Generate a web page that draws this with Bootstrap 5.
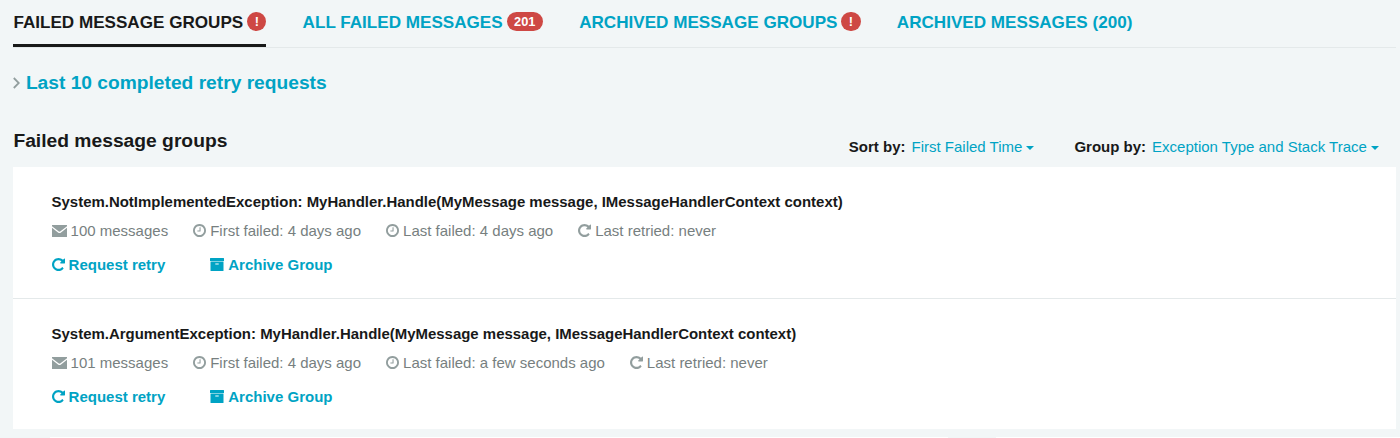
<!DOCTYPE html>
<html lang="en">
<head>
<meta charset="utf-8">
<title>Failed message groups</title>
<link href="https://cdn.jsdelivr.net/npm/bootstrap@5.3.0/dist/css/bootstrap.min.css" rel="stylesheet">
<style>
body{background:#f2f6f7;color:#181919;font-family:"Liberation Sans",Arial,sans-serif;font-size:15px;line-height:20px;height:438px;overflow:hidden}
a{color:#00a3c4;text-decoration:none}
svg{display:block;flex:none}
.page{padding:0 3.600px 0 13.400px}
.tabs{height:48px;border-bottom:1px solid #e4e9ea;gap:36.300px;font-size:17.100px;font-weight:700;flex-wrap:nowrap}
.tabs .nav-link{padding:12px 0 0;height:47px;color:#00a3c4;display:flex;gap:4px;line-height:21px;white-space:nowrap;border-bottom:0 solid #181919}
.tabs .nav-link.active{color:#181919;border-bottom-width:3px}
.tabs .badge{background:#ce4844;font-size:12.8px;line-height:19px;height:19px;padding:0 7.400px;border-radius:10px}
.retry{height:69px;font-size:19.200px;font-weight:700;gap:5.500px}
.heading{height:50px}
.heading h1{font-size:19.26px;font-weight:700;line-height:22px;margin:13px 0 0}
.filters{margin-top:20px;padding-right:17.500px;gap:40px}
.filters a{margin-left:6px}
.caret{display:inline-block;border:4px solid transparent;border-top:4.500px solid #00a3c4;border-bottom:0;vertical-align:2px;margin-left:4px}
.group-item{height:131px;padding:25px 0 0 38.200px}
.group-item+.group-item{border-top:1px solid #e4e9ea}
.group-item h2{font-size:14.960px;font-weight:700;line-height:20px;margin:0 0 9px}
.meta{color:#777f7f;gap:25px;margin-bottom:14px}
.meta svg{color:#929e9e}
.group-item svg:not(.mail){margin-bottom:1px}
.act{font-weight:700;gap:45px}
.next-panel{height:2px;margin-top:8px}
</style>
<script src="https://cdn.jsdelivr.net/npm/bootstrap@5.3.0/dist/js/bootstrap.bundle.min.js"></script>
</head>
<body>
<svg width="0" height="0" class="position-absolute">
<symbol id="clock" viewBox="0 128 1536 1536"><path fill="currentColor" d="M896 544v448q0 14-9 23t-23 9h-320q-14 0-23-9t-9-23v-64q0-14 9-23t23-9h224v-352q0-14 9-23t23-9h64q14 0 23 9t9 23zm416 352q0-148-73-273t-198-198-273-73-273 73-198 198-73 273 73 273 198 198 273 73 273-73 198-198 73-273zm224 0q0 209-103 385.500t-279.500 279.500-385.500 103-385.500-103-279.500-279.500-103-385.500 103-385.500 279.500-279.500 385.500-103 385.500 103 279.500 279.500 103 385.500z"/></symbol>
<symbol id="repeat" viewBox="128 128 1536 1536"><path fill="currentColor" d="M1664 256v448q0 26-19 45t-45 19h-448q-42 0-59-40-17-39 14-69l138-138q-148-137-349-137-104 0-198.500 40.500t-163.500 109.500-109.500 163.500-40.500 198.500 40.500 198.500 109.500 163.500 163.500 109.500 198.500 40.500q119 0 225-52t179-147q7-10 23-12 15 0 25 9l137 138q9 8 9.500 20.500t-7.500 22.500q-109 132-264 204.500t-327 72.500q-156 0-298-61t-245-164-164-245-61-298 61-298 164-245 245-164 298-61q147 0 284.500 55.500t244.500 156.500l130-129q29-31 70-14 39 17 39 59z"/></symbol>
<symbol id="mail" viewBox="0 0 15 12" preserveAspectRatio="none"><path fill="currentColor" d="M0 0h15v1.200L8.500 6.300q-1 .8-2 0L0 1.200z M0 2.700L6 7.500q1.500 1.200 3 0L15 2.700V12H0z"/></symbol>
<symbol id="box" viewBox="0 0 14 13"><path fill="currentColor" fill-rule="evenodd" d="M.5 0h13q.5 0 .5.500V3H0V.500Q0 0 .5 0zM.5 3.500h13v9q0 .5-.5.500H1q-.5 0-.5-.5zM5.300 5.500v1h3.400v-1z"/></symbol>
</svg>
<div class="page">
  <nav class="nav tabs">
    <a class="nav-link active" href="#">FAILED MESSAGE GROUPS <span class="badge">!</span></a>
    <a class="nav-link" href="#">ALL FAILED MESSAGES <span class="badge">201</span></a>
    <a class="nav-link" href="#">ARCHIVED MESSAGE GROUPS <span class="badge">!</span></a>
    <a class="nav-link" href="#">ARCHIVED MESSAGES (200)</a>
  </nav>
  <div class="retry d-flex align-items-center">
    <svg width="7" height="12" viewBox="0 0 7 12" fill="none" stroke="#929e9e" stroke-width="1.800"><path d="M.8 1l5 5-5 5"/></svg>
    <a href="#">Last 10 completed retry requests</a>
  </div>
  <div class="heading d-flex justify-content-between">
    <h1>Failed message groups</h1>
    <div class="filters d-flex">
      <div><b>Sort by:</b><a href="#">First Failed Time<span class="caret"></span></a></div>
      <div><b>Group by:</b><a href="#">Exception Type and Stack Trace<span class="caret"></span></a></div>
    </div>
  </div>
  <main class="bg-white">
    <section class="group-item">
      <h2>System.NotImplementedException: MyHandler.Handle(MyMessage message, IMessageHandlerContext context)</h2>
      <div class="meta d-flex">
        <span class="d-flex align-items-center gap-1"><svg class="mail" width="15" height="12"><use href="#mail"/></svg>100 messages</span>
        <span class="d-flex align-items-center gap-1"><svg width="13" height="13"><use href="#clock"/></svg>First failed: 4 days ago</span>
        <span class="d-flex align-items-center gap-1"><svg width="13" height="13"><use href="#clock"/></svg>Last failed: 4 days ago</span>
        <span class="d-flex align-items-center gap-1"><svg width="13" height="13"><use href="#repeat"/></svg>Last retried: never</span>
      </div>
      <div class="act d-flex">
        <a href="#" class="d-flex align-items-center gap-1"><svg width="13" height="13"><use href="#repeat"/></svg>Request retry</a>
        <a href="#" class="d-flex align-items-center gap-1"><svg width="14" height="13"><use href="#box"/></svg>Archive Group</a>
      </div>
    </section>
    <section class="group-item">
      <h2>System.ArgumentException: MyHandler.Handle(MyMessage message, IMessageHandlerContext context)</h2>
      <div class="meta d-flex">
        <span class="d-flex align-items-center gap-1"><svg class="mail" width="15" height="12"><use href="#mail"/></svg>101 messages</span>
        <span class="d-flex align-items-center gap-1"><svg width="13" height="13"><use href="#clock"/></svg>First failed: 4 days ago</span>
        <span class="d-flex align-items-center gap-1"><svg width="13" height="13"><use href="#clock"/></svg>Last failed: a few seconds ago</span>
        <span class="d-flex align-items-center gap-1"><svg width="13" height="13"><use href="#repeat"/></svg>Last retried: never</span>
      </div>
      <div class="act d-flex">
        <a href="#" class="d-flex align-items-center gap-1"><svg width="13" height="13"><use href="#repeat"/></svg>Request retry</a>
        <a href="#" class="d-flex align-items-center gap-1"><svg width="14" height="13"><use href="#box"/></svg>Archive Group</a>
      </div>
    </section>
  </main>
</div>
<div class="next-panel d-flex"><div class="bg-white" style="width:898px;margin-left:50px"></div><div class="bg-white flex-fill" style="margin-left:48px"></div></div>
</body>
</html>
